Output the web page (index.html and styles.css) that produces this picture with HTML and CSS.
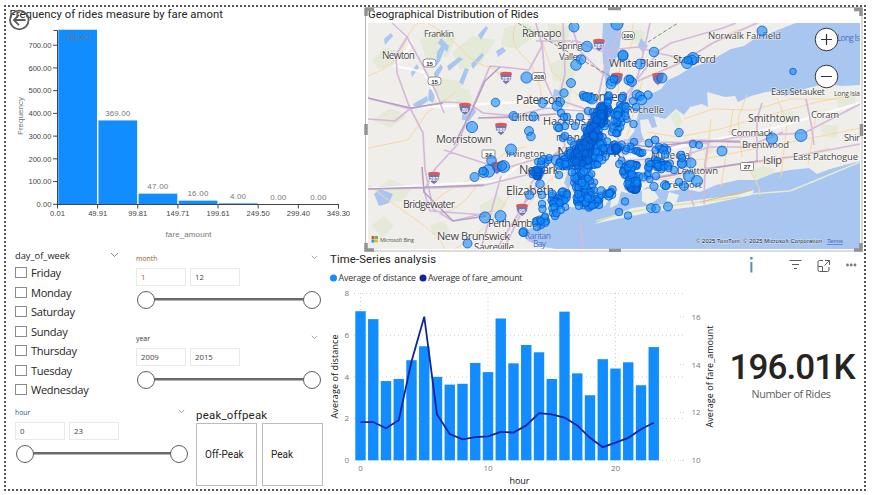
FILE: index.html
```html
<!DOCTYPE html>
<html lang="en">
<head>
<meta charset="utf-8">
<title>Rides dashboard</title>
<link rel="stylesheet" href="styles.css">
</head>
<body>
<main class="board">
  <section class="row row-top">
    <svg class="histogram" viewBox="6 7 358 245" id="histogram">
      <text class="title" x="9.5" y="18" textLength="213.500">Frequency of rides measure by fare amont</text>
      <g fill="none" stroke="#5a5a5a" stroke-width="1.8"><circle cx="19.300" cy="20" r="9.300"/><path d="M25.500 20H14M19 14.800L13.800 20L19 25.200"/></g>
    </svg>
    <svg class="map" viewBox="364 7 500 245">
      <defs>
        <clipPath id="mapClip"><rect x="368" y="23" width="492" height="226"/></clipPath>
        <g id="shield"><path d="M-5.500-5.500Q0-7 5.500-5.500Q7.500 2 0 6.500Q-7.500 2-5.500-5.500Z" fill="#7276b3" stroke="#f5f2f5" stroke-width=".8"/><path d="M-5.500-5.500Q0-7 5.500-5.500L6-3.200H-6Z" fill="#e8564d"/></g>
      </defs>
      <g clip-path="url(#mapClip)">
        <rect x="368" y="23" width="492" height="226" fill="#f0eeea"/>
        <g fill="#dde8cd" opacity=".65">
          <path d="M372 60l12-12 18 3-8 14-16 4zM420 40l16-9 20 6-8 20-22 2zM452 52l20-16 24 4-16 24-20 6zM504 28l22-5 14 9-22 17-17-3zM430 96l12-18 22 4-9 17-18 6zM372 120l18-12 17 8-17 12zM455 88l14 1 5 17-18 2zM548 24l24 2-7 21-15-4zM550 64l18-8 10 12-8 16-17-4zM560 82l13 5-5 22-12-4zM375 190l15-11 22 10-10 12-18 1zM480 205l17-10 10 9-12 15-15-4zM430 225l14-4 6 11-17 3zM372 225l12-9 10 10-12 12z"/>
          <path d="M835 95l19-1 2 11-17 3zM780 113l13-2 2 10-11 3zM820 124l18 2-2 12-14-2zM750 172l12-6 13 3-4 9-17 1zM670 115l8-4 5 12-7 5zM700 145l10-3 6 9-10 5zM635 29l10 3-3 14-8-4z"/>
        </g>
        <g fill="#a9c6f1">
          <path d="M796 23C776 30 771 34 757 37L744 46 731 49 715 58 702 64 690 68 679 75 668 80 661 89 651 94 646 101 640 105 637 120 634 132 628 139 626 146 637 146 644 140 641 132 640 120 648 119 652 128 657 127 654 116 665 119 676 109 684 115 690 107 702 104 708 107 707 92 718 95 725 97 735 96 738 102 751 96 766 92 777 91 785 96 795 93 808 88 825 84 842 86 860 85V23Z"/>
          <path d="M603 23L622 23 620 45 617 57 610 69 608 85 605 103 599 121 593 139 587 154 580 170 578 186 590 204 583 208 570 207 558 214 546 224 531 228 521 233 528 241 543 247 557 249H860V161L830 169 817 174 809 168 790 170 774 173 757 180 738 180 716 185 700 192 685 189 669 191 647 187 635 195 615 190 605 206 593 205 582 192 572 187 571 174 576 166 582 155 589 141 597 123 603 104 606 86 603 62 602 44Z"/>
          <path d="M374 194l6-5 13 5-4 9-10 3zM437 52l5-7 3 3-5 13-4 5zM447 66l12-9 4 2-14 12zM459 82l6-14 4 1-6 16zM471 64l11-11 2 2-11 14zM478 35l8-9 2 2-7 12zM434 73l7-9 2 4-8 13zM441 38l8 8-2 6-9-9zM462 114l12-7 2 5-7 9-7-1zM554 89l8 2-3 15-7-3zM411 72l6-8 2 4-7 9zM429 89l7 2-3 12-5-3zM496 51l7-4 3 4-8 6zM641 38l7 8-5 7-5-7zM384 39l7-6 2 3-8 9zM413 104l14-8 1 5-12 8zM568 171l4 6-3 13-5-7z"/>
        </g>
        <path d="M594 224L632 208 680 202 737 195 754 190 752 195 700 206 652 212 612 220Z" fill="#f0eeea"/>
        <path d="M613 187l8 4-3 13-8 4zM642 190l10-2 7 10-10 7-7-4zM669 192l10 3-4 10-9-3z" fill="#edf0e7"/>
        <path d="M750 194L790 191 812 182 860 162" fill="none" stroke="#e1ecd2" stroke-width="1.500"/>
        <path d="M596 221Q635 209 684 204L740 197" fill="none" stroke="#d8e5aa" stroke-width="1.500"/>
        <g fill="none" stroke="#f8d7a0" stroke-width="1">
          <path d="M368 76Q397 66 405 43T423 23M428 23Q451 37 463 51T495 69L506 86M516 23Q508 43 522 55T533 72Q542 83 541 103M542 40L552 72 565 83 582 99M617 105L620 65 632 44 633 23M627 137L643 78 675 66 702 49 732 32 760 23M368 185Q389 201 415 219T445 249M422 213Q442 192 462 183T508 170L535 156M368 148L408 140 427 113 456 92M441 214Q465 208 481 179T526 147M502 249L528 205 551 179 587 163M455 249Q500 221 511 190M647 132L678 137 720 129 780 112 821 101 860 95M640 165L704 159 759 148 832 134 860 128M634 184L676 177 711 168 780 160 830 148M684 119L713 109 754 110 790 99 836 99M705 181L711 119M721 187L733 110M742 157L738 119 747 94M781 177L787 123 777 98M808 165L817 110M748 166L759 188 760 196"/>
          <path d="M752 190L735 194 700 202" stroke="#f2b866"/>
        </g>
        <g fill="none" stroke="#fff" stroke-width="2.500" opacity=".8"><path d="M392 23L412 43 395 66 424 72 443 110M368 98L411 108 520 102 583 111M368 189L499 181 536 151M624 158L702 142 774 128 860 103"/></g>
        <g fill="none" stroke="#d5b9db" stroke-width="1.700" stroke-linejoin="round">
          <path d="M392 23L407 37 396 55 397 73 409 106 423 133 425 169 433 209 453 221 493 211M407 37L422 64 436 92 444 113M368 98L410 109 444 102 468 103 483 113 514 116 546 108 583 111 611 129M411 108L395 121 368 119M536 23L542 46 529 70 512 68 490 66 479 92 457 145 435 169 424 191 430 211 486 215M368 189L433 188 481 186 530 174 560 150M542 42L545 80 553 98 583 108 602 133 586 163M563 23L565 74 557 106 565 146 532 182 520 215 504 249M571 23L579 50 605 76M536 41L577 41 600 51 638 47 662 54 694 61M583 249L580 220M501 176L481 249M444 150L502 169 540 158M497 249Q514 219 546 171M623 23L605 66 597 102 595 139M650 23L639 72 627 103 616 132 626 165M660 50L636 81 613 114M660 50L671 43 723 28 736 23M638 81L680 63 713 43 757 23M624 140L657 142 706 143 737 137 804 133 860 104M624 148L656 151 692 140 740 141M620 161L680 157 709 147 747 147 783 132M650 178L702 169 745 163 797 156 860 144M690 170L691 145 718 140M694 206L684 178 691 149M704 204L705 163 709 140M814 145L811 123 806 99M757 162L757 119 762 103"/>
        </g>
        <g fill="none" stroke="#b59fc3" stroke-width="1.600"><path d="M368 98L411 108 443 103M368 189L432 187 484 185M422 167L424 192 453 221 486 216M500 67L485 81 473 108 454 145M478 118L513 117 556 114M624 143L649 147 701 141 740 142M656 178L720 167 758 161"/></g>
        <path d="M518 23L542 37 612 77M648 42L678 23" fill="none" stroke="#888" stroke-width="1" stroke-dasharray="4 2"/>
        <use href="#shield" x="599" y="45"/><use href="#shield" x="506" y="78"/><use href="#shield" x="465" y="109"/><use href="#shield" x="501" y="129"/><use href="#shield" x="434" y="178"/><use href="#shield" x="522" y="210"/><use href="#shield" x="617" y="79"/><use href="#shield" x="658" y="79"/><use href="#shield" x="497" y="168"/>
        <g class="shield-text"><text x="599" y="48">287</text><text x="506" y="81">287</text><text x="465" y="112">80</text><text x="501" y="132">280</text><text x="434" y="181">287</text><text x="522" y="213">95</text></g>
        <g fill="#fff" stroke="#777" stroke-width=".8"><rect x="423" y="59" width="13" height="8" rx="3"/><rect x="428" y="77" width="13" height="8" rx="3"/><rect x="532" y="72.500" width="13.500" height="8" rx="3"/><rect x="622" y="31.500" width="12.500" height="8" rx="3"/><rect x="482" y="150" width="13" height="8" rx="1"/><rect x="740.500" y="162.500" width="13" height="8" rx="1"/></g>
        <g class="road-text"><text x="429.500" y="65.500">15</text><text x="434.500" y="83.500">15</text><text x="539" y="79">208</text><text x="628" y="38">100</text><text x="488.500" y="156.500">24</text><text x="747" y="169">27</text></g>
        <g class="places">
          <text x="424" y="37" font-size="9" textLength="30">Franklin</text>
          <text x="382" y="59" font-size="10" textLength="33">Newton</text>
          <text x="522" y="37" font-size="11" textLength="39.500">Ramapo</text>
          <text x="557.500" y="49" font-size="9.500" textLength="25">Spring</text><text x="559" y="59.500" font-size="9.500" textLength="23">Valley</text>
          <text x="609" y="67" font-size="11" textLength="59">White Plains</text>
          <text x="516" y="104" font-size="12" textLength="46">Paterson</text>
          <text x="586" y="101" font-size="12" textLength="41">Yonkers</text>
          <text x="617" y="113" font-size="9.500" textLength="47">w Rochelle</text>
          <text x="511" y="121" font-size="10" textLength="29">Clifton</text>
          <text x="543" y="125" font-size="11" textLength="60">Hackensack</text>
          <text x="436" y="143" font-size="11" textLength="56">Morristown</text>
          <text x="506" y="157" font-size="9.500" textLength="39">Irvington</text>
          <text x="556" y="141" font-size="10" textLength="24">nion</text>
          <text x="557" y="157" font-size="15" textLength="64">New York</text>
          <text x="519" y="174" font-size="12.500" textLength="40">Newark</text>
          <text x="506" y="195" font-size="12" textLength="48">Elizabeth</text>
          <text x="403" y="208" font-size="10.500" textLength="52">Bridgewater</text>
          <text x="488" y="227" font-size="10.500" textLength="54">Perth Amboy</text>
          <text x="437" y="240" font-size="11" textLength="73">New Brunswick</text>
          <text x="474" y="250.500" font-size="10" textLength="40">Sayreville</text>
          <text x="673" y="62.500" font-size="11" textLength="43">Stamford</text>
          <text x="708" y="39" font-size="9.500" textLength="73">Norwalk Fairfield</text>
          <text x="771" y="95" font-size="9.500" textLength="54">East Setauket</text>
          <text x="834" y="96" font-size="7" textLength="26">Long Isla</text>
          <text x="748" y="122" font-size="10.500" textLength="52">Smithtown</text>
          <text x="811" y="118" font-size="9.500" textLength="28">Coram</text>
          <text x="731" y="136" font-size="9.500" textLength="42">Commack</text>
          <text x="742" y="148" font-size="9.500" textLength="47">Brentwood</text>
          <text x="844" y="141" font-size="9.500" textLength="16">Shir</text>
          <text x="763" y="164" font-size="11" textLength="19">Islip</text>
          <text x="793" y="160" font-size="9.500" textLength="65">East Patchogue</text>
          <text x="651" y="159" font-size="10" textLength="39">Mineola</text>
          <text x="677" y="174" font-size="9.500" textLength="41">Levittown</text>
          <text x="664" y="188" font-size="9.500" textLength="38">Freeport</text>
          <g class="water"><text x="525" y="239" font-size="8.500" textLength="26">Raritan</text><text x="533" y="246.500" font-size="8.500" textLength="13">Bay</text><text x="837" y="41" font-size="8.500" textLength="23">Long Is</text></g>
        </g>
        <g id="rides" fill="#118dff" fill-opacity=".6" stroke="#0450c2" stroke-opacity=".8" stroke-width=".9"></g>
        <g><path fill="#e74e2b" d="M371.500 236h3v3h-3z"/><path fill="#75b52c" d="M375 236h3v3h-3z"/><path fill="#179ee5" d="M371.500 239.500h3v3h-3z"/><path fill="#f8b617" d="M375 239.500h3v3h-3z"/></g>
        <text class="bing" x="380" y="241.500" textLength="34">Microsoft Bing</text>
        <text class="credit" x="696" y="243" textLength="126">© 2025 TomTom, © 2025 Microsoft Corporation</text>
        <text class="terms" x="827" y="243" textLength="16">Terms</text>
      </g>
      <text class="title" x="368" y="18" textLength="170.500">Geographical Distribution of Rides</text>
      <g fill="#fff" stroke="#333" stroke-width="1"><circle cx="826.500" cy="39.500" r="11.300"/><circle cx="826.500" cy="76.500" r="11.300"/><path d="M821 39.500h11M826.500 34v11M821 76.500h11" stroke-width="1.200"/></g>
      <rect x="365.500" y="7.500" width="496.500" height="243.500" fill="none" stroke="#b9b9b9"/>
      <path d="M366 16V9.500H374M854 9.500H861V16M366 243V250H374M854 250H861V243M608 8.500h13M609 250.500h12M366 124v11M861.500 124v12" fill="none" stroke="#929292" stroke-width="3.500"/>
    </svg>
  </section>
  <section class="row row-bottom">
    <div class="slicers">
      <div class="slicer-row slicer-main">
        <div class="days">
          <div class="days-head"><span>day_of_week</span><svg class="chev" viewBox="0 0 9 6"><path d="M1 1l3.500 3.500L8 1"/></svg></div>
          <label class="day"><i></i>Friday</label>
          <label class="day"><i></i>Monday</label>
          <label class="day"><i></i>Saturday</label>
          <label class="day"><i></i>Sunday</label>
          <label class="day"><i></i>Thursday</label>
          <label class="day"><i></i>Tuesday</label>
          <label class="day"><i></i>Wednesday</label>
        </div>
        <div class="ranges">
          <div class="range">
            <div class="range-head warm"><span>month</span><svg class="chev small" viewBox="0 0 9 6"><path d="M1 1l3.500 3.500L8 1"/></svg></div>
            <div class="boxes"><span class="warm">1</span><span>12</span></div>
            <div class="track"><b></b><b></b></div>
          </div>
          <div class="range">
            <div class="range-head"><span>year</span><svg class="chev small" viewBox="0 0 9 6"><path d="M1 1l3.500 3.500L8 1"/></svg></div>
            <div class="boxes"><span>2009</span><span>2015</span></div>
            <div class="track"><b></b><b></b></div>
          </div>
        </div>
      </div>
      <div class="slicer-row">
        <div class="range hour">
          <div class="range-head cool"><span>hour</span><svg class="chev small" viewBox="0 0 9 6"><path d="M1 1l3.500 3.500L8 1"/></svg></div>
          <div class="boxes"><span>0</span><span>23</span></div>
          <div class="track"><b></b><b></b></div>
        </div>
        <div class="peak">
          <div class="peak-title">peak_offpeak</div>
          <div class="tiles"><span>Off-Peak</span><span>Peak</span></div>
        </div>
      </div>
    </div>
    <svg class="combo" viewBox="328 252 392 237" id="combo">
      <text class="title" x="330" y="262.500" textLength="106">Time-Series analysis</text>
      <circle cx="333.500" cy="278" r="3.500" fill="#118dff"/><circle cx="423" cy="278" r="3.500" fill="#12239e"/>
      <text class="legend" x="338.500" y="281" textLength="77.500">Average of distance</text>
      <text class="legend" x="428" y="281" textLength="94.500">Average of fare_amount</text>
    </svg>
    <div class="kpi">
      <svg class="tools" viewBox="720 252 144 28">
        <g fill="none" stroke="#5c5c5c"><path d="M789.500 260.500h12M792 264.500h7M794 268.500h3"/><path d="M823 260.500h-3.500q-1.500 0-1.500 1.500v8q0 1.500 1.500 1.500h8q1.500 0 1.500-1.500v-3M818 266.500h4.500v5M825 260.500h4.500v4.500M829.500 260.500l-5 5"/></g>
        <g fill="#777"><circle cx="847.500" cy="265" r="1.400"/><circle cx="851.200" cy="265" r="1.400"/><circle cx="855" cy="265" r="1.400"/></g>
        <path d="M750.200 257h2.400v2.400h-2.400zM750.400 262h2v10.500h-2z" fill="#5b8db0"/>
      </svg>
      <svg class="kpi-value" viewBox="720 280 144 209">
        <text x="729.500" y="379" class="big" textLength="126">196.01K</text>
        <text x="751.500" y="398" class="sub" textLength="79.500">Number of Rides</text>
      </svg>
    </div>
  </section>
</main>
<script src="charts.js"></script>
</body>
</html>
```
FILE: styles.css
```css
* { box-sizing: border-box; }
body { margin: 0; background: #fff; color: #252423; font-family: "Open Sans", sans-serif; }
.board { width: 862px; height: 486px; margin: 5px 0 0 4px; border: 2px dotted #555; display: flex; flex-direction: column; }
.row { display: flex; }
.row-top { height: 245px; }
.row-bottom { height: 237px; }
svg { display: block; flex: none; }
.histogram { width: 358px; height: 245px; }
.map { width: 500px; height: 245px; }
.combo { width: 392px; height: 237px; }
.title { font: 11.3px Roboto, sans-serif; fill: #252423; }
.legend { font: 8.8px "Open Sans", sans-serif; fill: #333; }
.places { font-family: "Open Sans", sans-serif; fill: #454545; paint-order: stroke; stroke: #fff; stroke-opacity: .7; stroke-width: 1.2px; }
.water { fill: #4f72c4; stroke: none; }
.shield-text { font: bold 5.5px "Liberation Sans", sans-serif; fill: #fff; text-anchor: middle; }
.road-text { font: bold 6px "Liberation Sans", sans-serif; fill: #333; text-anchor: middle; }
.bing { font: 5.5px "Open Sans", sans-serif; fill: #555; }
.credit { font: 5.8px "Liberation Sans", sans-serif; fill: #111; paint-order: stroke; stroke: #fff; stroke-width: .8px; stroke-opacity: .6; }
.terms { font: 5.8px "Liberation Sans", sans-serif; fill: #3a5fb5; text-decoration: underline; }
.hist-tick { font: 7.6px "Liberation Sans", sans-serif; fill: #444; }
.hist-label { font: 8px "Liberation Sans", sans-serif; fill: #777; text-anchor: middle; }
.axis { font: 8px "Open Sans", sans-serif; fill: #777; }
.axis-title { font: 9px "Open Sans", sans-serif; fill: #111; text-anchor: middle; }
.end { text-anchor: end; }
.mid { text-anchor: middle; }
.slicers { width: 322px; display: flex; flex-direction: column; }
.slicer-row { display: flex; }
.slicer-main { height: 153px; }
.days { width: 124px; padding-left: 9px; }
.days-head { display: flex; justify-content: space-between; align-items: flex-start; height: 11px; padding-right: 11px; font: 9.3px/8px "Open Sans", sans-serif; }
.chev { width: 9px; height: 6px; fill: none; stroke: #777; stroke-width: .9; }
.chev.small { width: 7px; height: 5px; margin-top: -3px; }
.day { display: flex; align-items: center; gap: 4px; height: 19.5px; font-size: 11.1px; letter-spacing: -.3px; }
.day i { width: 12px; height: 11px; border: 1px solid #8b8b8b; }
.ranges { flex: 1; }
.range { height: 80px; padding: 3px 7px 0 6px; }
.range-head { display: flex; justify-content: space-between; align-items: center; height: 8px; padding-right: 3px; font-size: 6.9px; line-height: 8px; color: #333; }
.range-head.warm, .boxes .warm { color: #a05a1c; }
.range-head.cool { color: #31587a; }
.boxes { display: flex; gap: 4px; margin-top: 5px; }
.boxes span { width: 50px; height: 18px; border: 1px solid #e9e9e9; padding-left: 4px; font-size: 7.8px; line-height: 16px; color: #444; }
.track { display: flex; justify-content: space-between; align-items: center; height: 17px; margin: 5px 0 0 1px; background: linear-gradient(#6b6b66, #6b6b66) center / calc(100% - 20px) 2.5px no-repeat; }
.track b { width: 18px; height: 18px; border: 1.5px solid #5e5e5e; border-radius: 50%; background: #fff; }
.range.hour { width: 183px; padding: 4px 1px 0 9px; }
.peak { padding: 4px 0 0 7px; }
.peak-title { font: 11.4px/12px Roboto, sans-serif; letter-spacing: .25px; height: 14px; }
.tiles { display: flex; gap: 5px; }
.tiles span { width: 61px; height: 63px; border: 1px solid #bcbcbc; padding-left: 8px; font: 10px/62px Roboto, sans-serif; }
.kpi { width: 144px; }
.tools { width: 144px; height: 28px; }
.kpi-value { width: 144px; height: 209px; }
.big { font: 500 35px Roboto, sans-serif; fill: #252423; }
.sub { font: 10.8px "Open Sans", sans-serif; fill: #605e5c; }
```
FILE: charts.js
```js
const NS = 'http://www.w3.org/2000/svg';
function add(parent, name, attrs, text) {
  const el = document.createElementNS(NS, name);
  for (const k in attrs) el.setAttribute(k, attrs[k]);
  if (text !== undefined) el.textContent = text;
  parent.appendChild(el);
  return el;
}

// Histogram of fares
const hist = document.getElementById('histogram');
const counts = [768, 369, 47, 16, 4, 0, 0];
const edges = ['0.01', '49.91', '99.81', '149.71', '199.61', '249.50', '299.40', '349.30'];
counts.forEach((c, i) => {
  const x = 57.5 + i * 40.14, h = c * 0.2273;
  add(hist, 'rect', { x: x + 0.8, y: 204.3 - h, width: 38.7, height: h, fill: '#118dff' });
  add(hist, 'text', { class: 'hist-label', x: x + 20, y: i === 0 ? 40 : 200 - h, textLength: c > 99 ? 25 : c > 9 ? 21 : 16 }, c.toFixed(2));
});
add(hist, 'path', { d: 'M53.5 30.5H57.5V204.5H338.500V208.500', fill: 'none', stroke: '#444' });
for (let v = 0; v <= 700; v += 100) {
  const y = 204.3 - v * 0.2273;
  add(hist, 'path', { d: `M53 ${y}h4.500`, stroke: '#444' });
  add(hist, 'text', { class: 'hist-tick end', x: 51.5, y: y + 2.7, textLength: v ? 23 : 15 }, v.toFixed(2));
}
edges.forEach((e, i) => {
  const x = 57.5 + i * 40.14;
  add(hist, 'path', { d: `M${x} 204v4.500`, stroke: '#444' });
  add(hist, 'text', { class: 'hist-tick mid', x, y: 216 }, e);
});
add(hist, 'text', { class: 'hist-label', x: 188.5, y: 237, textLength: 46 }, 'fare_amount');
add(hist, 'text', { class: 'hist-label', transform: 'translate(23 116) rotate(-90)', textLength: 38 }, 'Frequency');

// Distance bars and fare line by hour
const combo = document.getElementById('combo');
const dist = [7.15, 6.77, 3.8, 3.9, 4.8, 5.47, 4, 3.63, 3.67, 4.67, 4.23, 6.8, 4.65, 5.53, 5.18, 3.9, 7.13, 4.17, 3.12, 4.85, 4.4, 4.7, 3.6, 5.43];
const fare = [11.6, 11.6, 11.34, 11.68, 14.13, 16.01, 11.92, 11.1, 10.88, 10.97, 11, 11.19, 11.16, 11.46, 11.97, 11.92, 11.79, 11.46, 10.94, 10.55, 10.74, 10.94, 11.3, 11.57];
const hx = h => 360.5 + h * 12.75;
for (let v = 0; v <= 8; v += 2) {
  const y = 460.3 - v * 20.85;
  add(combo, 'path', { d: `M354 ${y}H685`, stroke: '#cfcfcf', 'stroke-dasharray': '1 3' });
  add(combo, 'text', { class: 'axis end', x: 349, y: y + 2.8 }, v);
}
for (let v = 10; v <= 16; v += 2) {
  const y = 460.3 - (v - 10) * 23.9;
  add(combo, 'path', { d: `M680 ${y}h6`, stroke: '#cfcfcf', 'stroke-dasharray': '1 2' });
  add(combo, 'text', { class: 'axis', x: 691.5, y: y + 2.8 }, v);
}
[0, 10, 20].forEach(h => {
  add(combo, 'path', { d: `M${hx(h)} 293V460`, stroke: '#cfcfcf', 'stroke-dasharray': '1 3' });
  add(combo, 'text', { class: 'axis mid', x: hx(h), y: 471 }, h);
});
dist.forEach((d, h) => add(combo, 'rect', { x: hx(h) - 5.2, y: 460.3 - d * 20.85, width: 10.4, height: d * 20.85, fill: '#118dff' }));
add(combo, 'polyline', { points: fare.map((f, h) => `${hx(h)},${460.3 - (f - 10) * 23.9}`).join(' '), fill: 'none', stroke: '#12239e', 'stroke-width': 1.8 });
add(combo, 'text', { class: 'axis-title', x: 519.5, y: 484, textLength: 20 }, 'hour');
add(combo, 'text', { class: 'axis-title', transform: 'translate(337.500 376.500) rotate(-90)', textLength: 84 }, 'Average of distance');
add(combo, 'text', { class: 'axis-title', transform: 'translate(712.500 376.500) rotate(-90)', textLength: 102 }, 'Average of fare_amount');

// Pickup points
const rides = document.getElementById('rides');
const dot = (x, y, r = 3.8) => add(rides, 'circle', { cx: x.toFixed(1), cy: y.toFixed(1), r });
[[574,27,5],[617,24,6],[587,46.5,5.3],[581,59.5,4.8],[576,65,5.3],[654,52,4.8],[623,56,5],[623,55,5],[640,64,5],[571,83,4.5],[564,93,4.2],[560,102,4.5],[557,106,5],[612,81,5],[611,84,5],[614,79,4],[629,80,5],[632,82,4.5],[630,79,3.8],[662,78,5],[583,95],[584,97],[590,98,5],[592,99,5],[587,97,4.5],[561,113],[567,117],[588,111],[593,112],[565,126],[564,117],[558,127,4.5],[559,128],[623,96],[622,98],[637,95,5],[640,96,4.5],[648,95,4.2],[642,100,4.8],[636,107],[633,101],[575,126],[580,117],[585,128],[563,138],[565,136],[571,141],[574,145],
[526.5,77.5,5.6],[495.5,102.5,4.3],[472,127,5.6],[542.5,103,4.5],[513.5,116,4.5],[533.5,116.5,4.5],[529,131,4.5],[531,136.5,4.3],[511,149.5,5.5],[491.5,160.5,4.8],[503.5,166.5,6],[502,166,4.5],[488.5,171,6.2],[483.5,172.5,5],[483,171,4],[474.5,177,4.5],[540,184,4.3],[529.5,195,4.3],[485,217.5,5.6],[500.5,216,5.5],[523.5,232,4.5],[523,232.5,4],[467.5,243.5,4.5],[542,195],[542,204],[542.5,209],[537,221],[541,222],[546,221],[553,213],[555,216],[541,225],[537,227],[544,159],[556,160,5],[559,175],
[679,132.5,4.2],[722,151,5],[693,144],[699,145,3.6],[772,138.5,5.6],[801,135.5,6],[649,143,4],[655,140,4],[667,150,4],[681,155,4],[691,163,5],[689,176,5.5],[697,181,5.5],[684,186,4.5],[679,182],[665,185,4.5],[666,186,3.8],[654,186.5,4.2],[625,201.5],[619,212],[628,215.5],[651,208,4.5],[656,208.5,4.3],[668,206.5,4.5],[793,71.5,3.3],[762,31,5],[693,58.5,6],[692,60,5],[687,63,5.5],[688,60,4],[633.5,124],[682,163,4.8],[682,164,4.5],[682,158],[674,170],[656,176],[657,167],[634,142]
].forEach(p => dot(...p));

let seed = 7;
const rnd = () => (seed = (seed * 16807) % 2147483647) / 2147483647;
// Scatter n points along a segment, w0 to w1 wide
function strip(x0, y0, x1, y1, w0, w1, n, deep) {
  const len = Math.hypot(x1 - x0, y1 - y0), nx = -(y1 - y0) / len, ny = (x1 - x0) / len;
  for (let i = 0; i < n; i++) {
    const t = rnd(), o = (rnd() + rnd() - 1) * (w0 + (w1 - w0) * t);
    const c = dot(x0 + (x1 - x0) * t + nx * o, y0 + (y1 - y0) * t + ny * o, 3.2 + rnd() * 0.9);
    if (deep) c.setAttribute('fill', '#0870e4');
  }
}
strip(596, 130, 580, 166, 11, 16, 60);
strip(568, 150, 568, 167, 11, 11, 38);
strip(582, 160, 587, 207, 13, 12, 90);
strip(576, 201, 600, 202, 8, 7, 32);
strip(592, 160, 603, 148, 10, 8, 20);
strip(600, 193, 613, 193, 5, 4, 10);
strip(621, 105, 617, 134, 10, 8, 34);
strip(611, 92, 600, 125, 4, 9, 26);
strip(605, 107, 580, 160, 5, 11, 130, true);
strip(585, 142, 579, 163, 7, 10, 60, true);
strip(600, 145, 622, 148, 6, 4, 20);
strip(615, 149, 617, 149, 3, 3, 12, true);
strip(626, 148, 645, 154, 4, 4, 10);
strip(618, 160, 628, 180, 4, 5, 12);
strip(633, 163, 633, 189, 7, 8, 30);
strip(630, 184, 637, 189, 4, 4, 24, true);
strip(624, 184, 650, 179, 4, 4, 12);
strip(647, 166, 673, 164, 8, 5, 28);
strip(650, 148, 667, 151, 5, 5, 6);
strip(539, 169, 536, 176, 4, 4, 26, true);
strip(538, 165, 550, 158, 4, 4, 6);
strip(551, 200, 568, 197, 10, 10, 34);
strip(536, 223, 561, 208, 5, 5, 10);
```
